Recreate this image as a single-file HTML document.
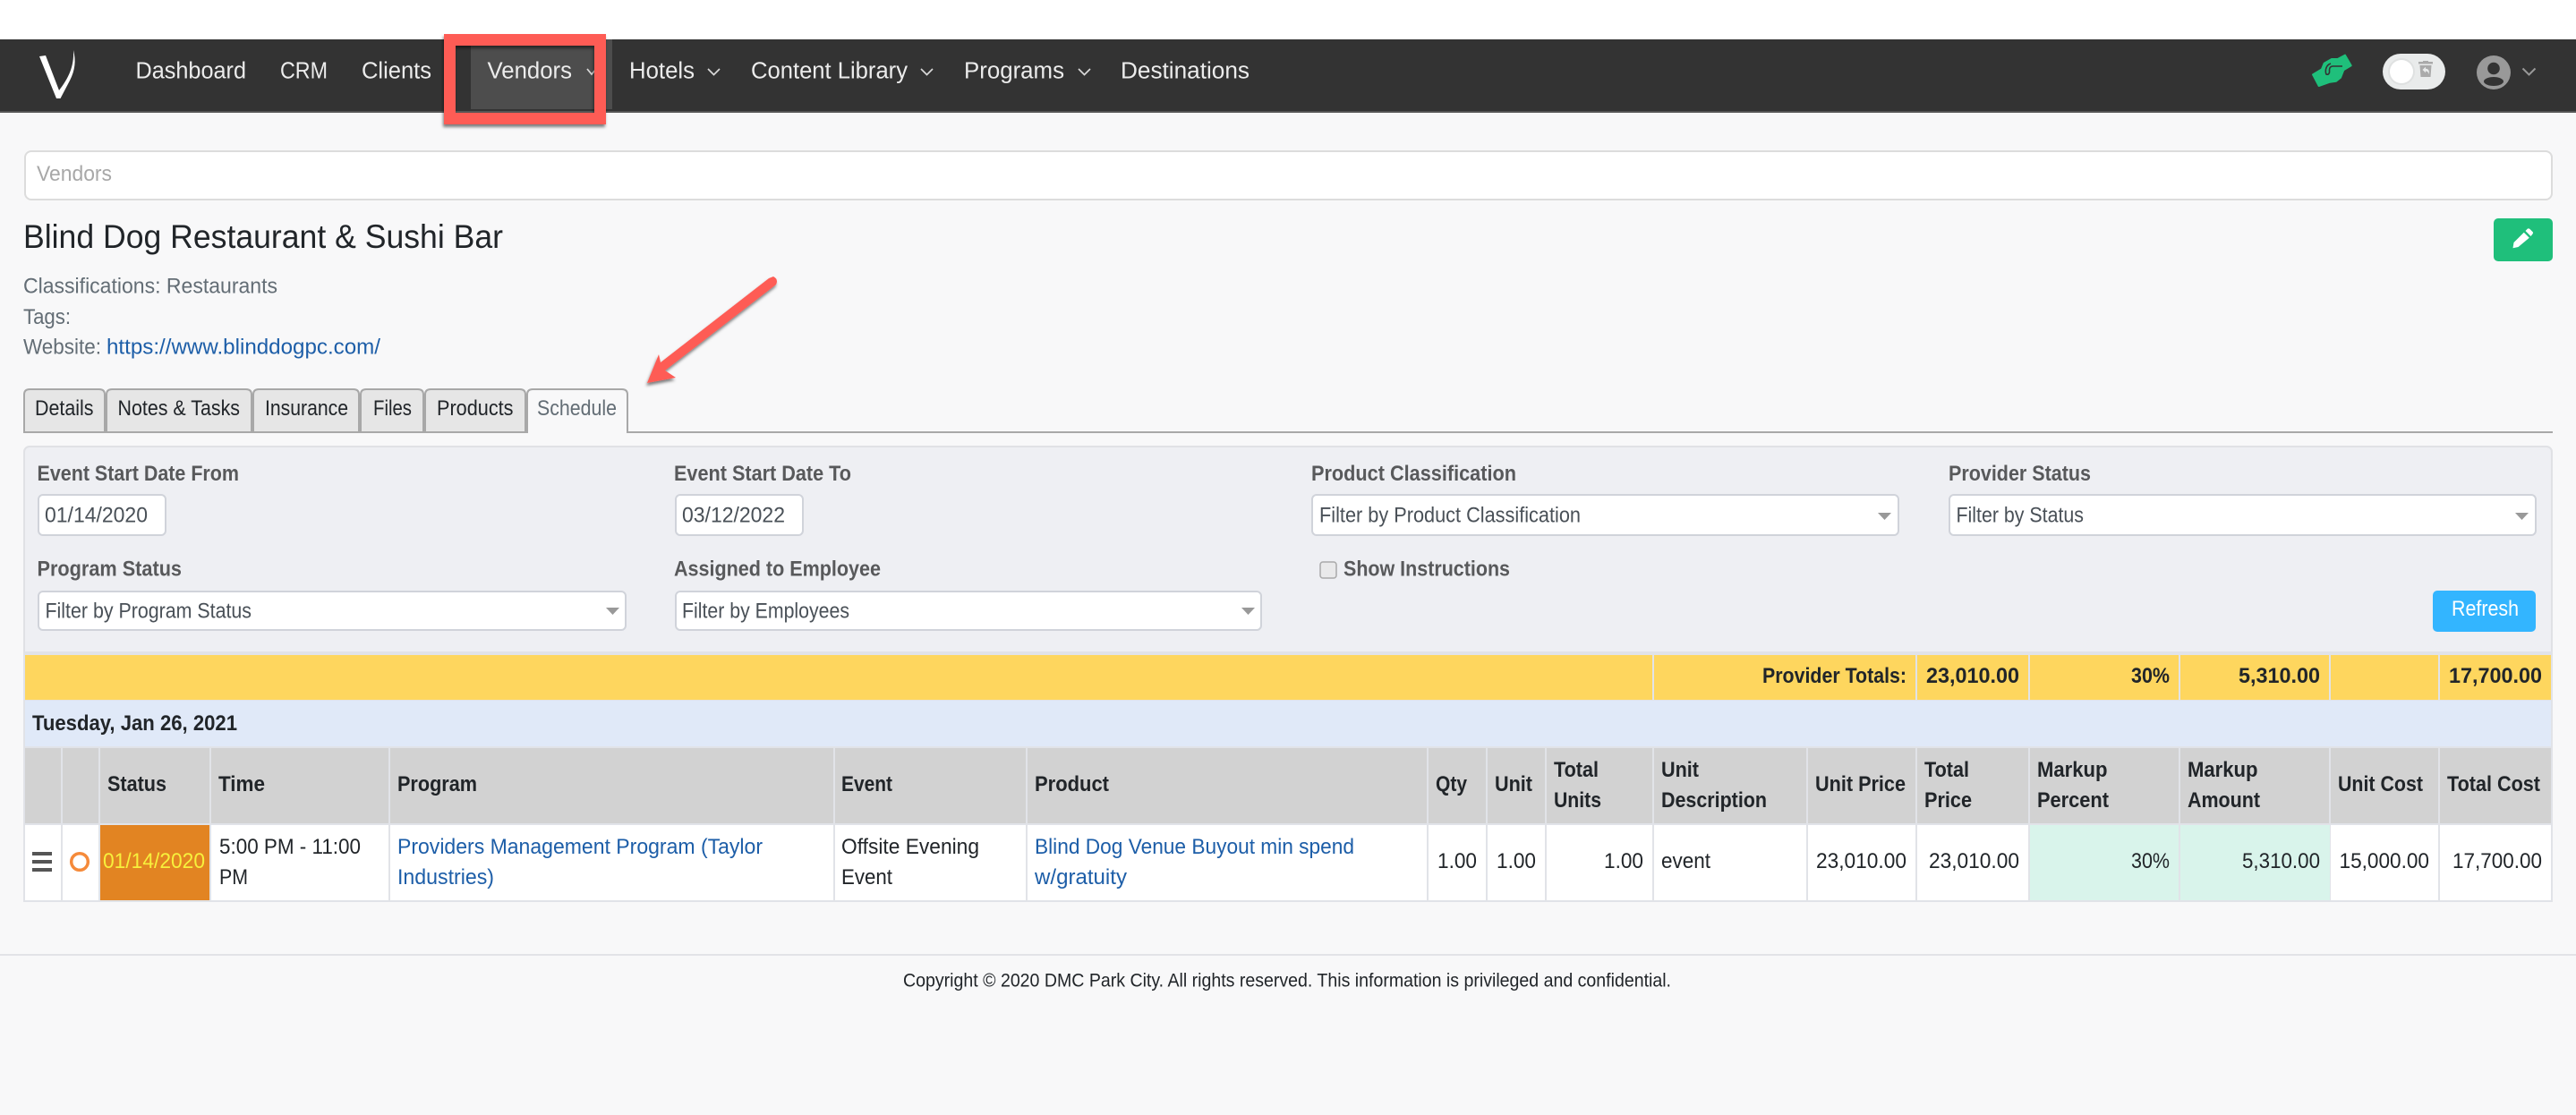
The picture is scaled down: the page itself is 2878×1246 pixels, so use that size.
<!DOCTYPE html>
<html lang="en">
<head>
<meta charset="utf-8">
<title>Blind Dog Restaurant &amp; Sushi Bar</title>
<style>
html,body{margin:0;padding:0;width:2878px;height:1246px;overflow:hidden;background:#f8f8f9}
svg{display:block;position:absolute;left:0;top:0}
text{font-family:"Liberation Sans",Arial,sans-serif;white-space:pre}
.n{font-size:26.2px;fill:#ececec}
.m{font-size:24.2px;fill:#636d75}
.a{font-size:24.2px;fill:#1d5ea8}
.t{font-size:24.2px;fill:#212529}
.l{font-size:24.2px;fill:#58595b;font-weight:700}
.i{font-size:24.2px;fill:#495057}
.h{font-size:24.2px;fill:#212529;font-weight:700}
.f{fill:#fff;stroke:#d0d3da;stroke-width:2}
.tab{fill:#e6e6e6;stroke:#a8a8a8;stroke-width:2}
.c{fill:none;stroke:#d8d8d8;stroke-width:1.7}
.sel{fill:#999}
</style>
</head>
<body>
<svg width="2878" height="1246" viewBox="0 0 2878 1246" xmlns="http://www.w3.org/2000/svg">
<defs>
<filter id="sh" x="-10%" y="-10%" width="125%" height="125%"><feDropShadow dx="-1" dy="3" stdDeviation="1.5" flood-color="#000" flood-opacity=".5"/></filter>
</defs>
<rect width="2878" height="1246" fill="#f8f8f9"/>
<rect width="2878" height="44" fill="#fff"/>
<!-- nav -->
<rect y="44" width="2878" height="82" fill="#333"/>
<rect y="124" width="2878" height="2" fill="#555"/>
<rect x="526" y="44" width="158" height="78" fill="#4d4d4d"/>
<path d="M44 63 L51 62 L66 101 C76 88 83 75 82 56 C85 68 84 78 78 90 L67.500 110 L63 110 Z" fill="#fff"/>
<text class="n" x="151.500" y="87.500" textLength="123.500" lengthAdjust="spacingAndGlyphs">Dashboard</text>
<text class="n" x="313" y="87.500" textLength="53" lengthAdjust="spacingAndGlyphs">CRM</text>
<text class="n" x="404" y="87.500" textLength="78" lengthAdjust="spacingAndGlyphs">Clients</text>
<text class="n" x="544.500" y="87.500" textLength="94.500" lengthAdjust="spacingAndGlyphs">Vendors</text>
<path class="c" d="M656 77 L661 83 L666 77"/>
<text class="n" x="703" y="87.500" textLength="73" lengthAdjust="spacingAndGlyphs">Hotels</text>
<path class="c" d="M791 77 L797.500 83.500 L804 77"/>
<text class="n" x="839" y="87.500" textLength="175" lengthAdjust="spacingAndGlyphs">Content Library</text>
<path class="c" d="M1029 77 L1035.500 83.500 L1042 77"/>
<text class="n" x="1077" y="87.500" textLength="112" lengthAdjust="spacingAndGlyphs">Programs</text>
<path class="c" d="M1205 77 L1211.500 83.500 L1218 77"/>
<text class="n" x="1252" y="87.500" textLength="144" lengthAdjust="spacingAndGlyphs">Destinations</text>
<!-- handshake -->
<path d="M2584 83.300 L2594 77.300 L2596.700 70.700 L2605 66 L2611.700 66 L2620 61.700 L2626.700 73.300 L2618.300 78.300 L2615 86.700 L2610 90.700 L2603 91.700 L2590.700 96 Z" fill="#1fbf7b" stroke="#1fbf7b" stroke-width="2" stroke-linejoin="round"/>
<path d="M2617 74 L2606 74 Q2602.500 74.500 2602.500 78 L2602.500 81 Q2601.500 84 2599 83 Q2598 81 2598.500 77.500 Q2599.500 72.500 2604 71" fill="none" stroke="#333" stroke-width="1.600"/>
<!-- toggle -->
<rect x="2662" y="60" width="70" height="40" rx="20" fill="#e9ebeb"/>
<circle cx="2683" cy="80" r="15" fill="#dfe1e1"/>
<circle cx="2683" cy="80" r="13" fill="#fff"/>
<rect x="2702" y="69" width="16" height="2.500" fill="#aaa"/>
<rect x="2707" y="68" width="6" height="2" fill="#aaa"/>
<path d="M2703.500 73 H2716.500 L2715.500 86 H2704.500 Z" fill="#aaa"/>
<path d="M2706.500 78 L2710 74.800 V76.800 C2713.500 77 2714.500 79.500 2713.500 83 C2713 80.500 2712 79.500 2710 79.500 V81.300 Z" fill="#e9ebeb"/>
<!-- avatar -->
<circle cx="2786" cy="81" r="19" fill="#999"/>
<circle cx="2786" cy="76.500" r="6.800" fill="#333"/>
<ellipse cx="2786" cy="91" rx="11" ry="5" fill="#333"/>
<path d="M2818.500 76.500 L2825.500 83.500 L2832.500 76.500" fill="none" stroke="#999" stroke-width="2"/>
<!-- search -->
<rect x="28" y="169" width="2823" height="54" rx="7" fill="#fff" stroke="#dcdcdc" stroke-width="2"/>
<text x="41" y="202" font-size="24.2" fill="#a8a8a8" textLength="84" lengthAdjust="spacingAndGlyphs">Vendors</text>
<!-- heading -->
<text x="26" y="277" font-size="37.5" fill="#212529" textLength="536" lengthAdjust="spacingAndGlyphs">Blind Dog Restaurant &amp; Sushi Bar</text>
<rect x="2786" y="244" width="66" height="48" rx="5" fill="#1fbf7b"/>
<path d="M2824 255.500 Q2825.500 255 2826.500 256 L2829.500 259 Q2830.500 260 2829.500 261.500 L2827.500 264 L2821.500 258 Z M2819.800 259.700 L2825.800 265.700 L2813.500 276 L2807.500 277.300 L2808.500 271 Z" fill="#fff"/>
<text class="m" x="26" y="327.500" textLength="284" lengthAdjust="spacingAndGlyphs">Classifications: Restaurants</text>
<text class="m" x="26" y="362" textLength="53" lengthAdjust="spacingAndGlyphs">Tags:</text>
<text class="m" x="26" y="395.500" textLength="87" lengthAdjust="spacingAndGlyphs">Website:</text>
<text class="a" x="119" y="395.500" textLength="306" lengthAdjust="spacingAndGlyphs">https://www.blinddogpc.com/</text>
<!-- tabs -->
<path class="tab" d="M27 483 V441 Q27 435 33 435 H111 Q117 435 117 441 V483 Z"/>
<path class="tab" d="M119 483 V441 Q119 435 125 435 H275 Q281 435 281 441 V483 Z"/>
<path class="tab" d="M283 483 V441 Q283 435 289 435 H395 Q401 435 401 441 V483 Z"/>
<path class="tab" d="M403 483 V441 Q403 435 409 435 H467 Q473 435 473 441 V483 Z"/>
<path class="tab" d="M475 483 V441 Q475 435 481 435 H581 Q587 435 587 441 V483 Z"/>
<rect x="26" y="482" width="2826" height="2" fill="#a8a8a8"/>
<path d="M589 484 V441 Q589 435 595 435 H695 Q701 435 701 441 V484" fill="#f8f8f9" stroke="#a8a8a8" stroke-width="2"/>
<text class="t" x="39" y="464" textLength="65.500" lengthAdjust="spacingAndGlyphs">Details</text>
<text class="t" x="131.500" y="464" textLength="136.500" lengthAdjust="spacingAndGlyphs">Notes &amp; Tasks</text>
<text class="t" x="296" y="464" textLength="93" lengthAdjust="spacingAndGlyphs">Insurance</text>
<text class="t" x="417" y="464" textLength="43" lengthAdjust="spacingAndGlyphs">Files</text>
<text class="t" x="488" y="464" textLength="85.500" lengthAdjust="spacingAndGlyphs">Products</text>
<text class="m" x="600" y="464" textLength="89" lengthAdjust="spacingAndGlyphs">Schedule</text>
<!-- filter panel -->
<rect x="27" y="499" width="2824" height="240" rx="6" fill="#eeeff3" stroke="#e0e1e5" stroke-width="2"/>
<text class="l" x="41.500" y="537" textLength="225.500" lengthAdjust="spacingAndGlyphs">Event Start Date From</text>
<rect class="f" x="43" y="553" width="142" height="45" rx="5"/>
<text class="i" x="50" y="583.500" textLength="115" lengthAdjust="spacingAndGlyphs">01/14/2020</text>
<text class="l" x="753" y="537" textLength="198" lengthAdjust="spacingAndGlyphs">Event Start Date To</text>
<rect class="f" x="755" y="553" width="142" height="45" rx="5"/>
<text class="i" x="762" y="583.500" textLength="115" lengthAdjust="spacingAndGlyphs">03/12/2022</text>
<text class="l" x="1465" y="537" textLength="229" lengthAdjust="spacingAndGlyphs">Product Classification</text>
<rect class="f" x="1466" y="553" width="655" height="45" rx="5"/>
<text class="i" x="1474" y="583.500" textLength="292" lengthAdjust="spacingAndGlyphs">Filter by Product Classification</text>
<path class="sel" d="M2098 573 H2113 L2105.500 581 Z"/>
<text class="l" x="2177" y="537" textLength="159" lengthAdjust="spacingAndGlyphs">Provider Status</text>
<rect class="f" x="2178" y="553" width="655" height="45" rx="5"/>
<text class="i" x="2185.500" y="583.500" textLength="142.500" lengthAdjust="spacingAndGlyphs">Filter by Status</text>
<path class="sel" d="M2810 573 H2825 L2817.500 581 Z"/>
<text class="l" x="41.500" y="643.500" textLength="161.500" lengthAdjust="spacingAndGlyphs">Program Status</text>
<rect class="f" x="43" y="661" width="656" height="43" rx="5"/>
<text class="i" x="50.500" y="690.500" textLength="230.500" lengthAdjust="spacingAndGlyphs">Filter by Program Status</text>
<path class="sel" d="M677 679 H692 L684.500 687 Z"/>
<text class="l" x="753" y="643.500" textLength="231" lengthAdjust="spacingAndGlyphs">Assigned to Employee</text>
<rect class="f" x="755" y="661" width="654" height="43" rx="5"/>
<text class="i" x="762" y="690.500" textLength="187" lengthAdjust="spacingAndGlyphs">Filter by Employees</text>
<path class="sel" d="M1387 679 H1402 L1394.500 687 Z"/>
<rect x="1475" y="628" width="18" height="18" rx="3" fill="#e9e9ea" stroke="#a9a9a9" stroke-width="1.500"/>
<text class="l" x="1501" y="643.500" textLength="186" lengthAdjust="spacingAndGlyphs">Show Instructions</text>
<rect x="2718" y="660" width="115" height="46" rx="5" fill="#33b5ff"/>
<text x="2739" y="688" font-size="24.2" fill="#fff" textLength="75" lengthAdjust="spacingAndGlyphs">Refresh</text>
<!-- table -->
<rect x="26" y="728" width="2826" height="280" fill="#e1e3e8"/>
<rect x="28" y="732" width="1818" height="50" fill="#fed65e"/>
<rect x="1848" y="732" width="292" height="50" fill="#fed65e"/>
<rect x="2142" y="732" width="124" height="50" fill="#fed65e"/>
<rect x="2268" y="732" width="166" height="50" fill="#fed65e"/>
<rect x="2436" y="732" width="166" height="50" fill="#fed65e"/>
<rect x="2604" y="732" width="120" height="50" fill="#fed65e"/>
<rect x="2726" y="732" width="124" height="50" fill="#fed65e"/>
<text class="h" x="1969" y="763" textLength="161" lengthAdjust="spacingAndGlyphs">Provider Totals:</text>
<text class="h" x="2152" y="763" textLength="104" lengthAdjust="spacingAndGlyphs">23,010.00</text>
<text class="h" x="2381" y="763" textLength="43" lengthAdjust="spacingAndGlyphs">30%</text>
<text class="h" x="2501" y="763" textLength="91" lengthAdjust="spacingAndGlyphs">5,310.00</text>
<text class="h" x="2736" y="763" textLength="104" lengthAdjust="spacingAndGlyphs">17,700.00</text>
<rect x="28" y="783" width="2822" height="51" fill="#e0e9f8"/>
<text class="h" x="36" y="816" textLength="229" lengthAdjust="spacingAndGlyphs">Tuesday, Jan 26, 2021</text>
<!-- header cells -->
<g fill="#d2d2d2">
<rect x="28" y="836" width="40" height="84"/><rect x="70" y="836" width="40" height="84"/><rect x="112" y="836" width="122" height="84"/><rect x="236" y="836" width="198" height="84"/><rect x="436" y="836" width="495" height="84"/><rect x="933" y="836" width="213" height="84"/><rect x="1148" y="836" width="446" height="84"/><rect x="1596" y="836" width="64" height="84"/><rect x="1662" y="836" width="64" height="84"/><rect x="1728" y="836" width="118" height="84"/><rect x="1848" y="836" width="170" height="84"/><rect x="2020" y="836" width="120" height="84"/><rect x="2142" y="836" width="124" height="84"/><rect x="2268" y="836" width="166" height="84"/><rect x="2436" y="836" width="166" height="84"/><rect x="2604" y="836" width="120" height="84"/><rect x="2726" y="836" width="124" height="84"/>
</g>
<text class="h" x="120" y="884" textLength="66" lengthAdjust="spacingAndGlyphs">Status</text>
<text class="h" x="244" y="884" textLength="52" lengthAdjust="spacingAndGlyphs">Time</text>
<text class="h" x="444" y="884" textLength="89" lengthAdjust="spacingAndGlyphs">Program</text>
<text class="h" x="940" y="884" textLength="57" lengthAdjust="spacingAndGlyphs">Event</text>
<text class="h" x="1156" y="884" textLength="83" lengthAdjust="spacingAndGlyphs">Product</text>
<text class="h" x="1604" y="884" textLength="35" lengthAdjust="spacingAndGlyphs">Qty</text>
<text class="h" x="1670" y="884" textLength="42" lengthAdjust="spacingAndGlyphs">Unit</text>
<text class="h" x="1736" y="868" textLength="50" lengthAdjust="spacingAndGlyphs">Total</text>
<text class="h" x="1736" y="902" textLength="53" lengthAdjust="spacingAndGlyphs">Units</text>
<text class="h" x="1856" y="868" textLength="42" lengthAdjust="spacingAndGlyphs">Unit</text>
<text class="h" x="1856" y="902" textLength="118" lengthAdjust="spacingAndGlyphs">Description</text>
<text class="h" x="2028" y="884" textLength="101" lengthAdjust="spacingAndGlyphs">Unit Price</text>
<text class="h" x="2150" y="868" textLength="50" lengthAdjust="spacingAndGlyphs">Total</text>
<text class="h" x="2150" y="902" textLength="53" lengthAdjust="spacingAndGlyphs">Price</text>
<text class="h" x="2276" y="868" textLength="78.500" lengthAdjust="spacingAndGlyphs">Markup</text>
<text class="h" x="2276" y="902" textLength="80" lengthAdjust="spacingAndGlyphs">Percent</text>
<text class="h" x="2444" y="868" textLength="78.500" lengthAdjust="spacingAndGlyphs">Markup</text>
<text class="h" x="2444" y="902" textLength="81" lengthAdjust="spacingAndGlyphs">Amount</text>
<text class="h" x="2612" y="884" textLength="95" lengthAdjust="spacingAndGlyphs">Unit Cost</text>
<text class="h" x="2734" y="884" textLength="104" lengthAdjust="spacingAndGlyphs">Total Cost</text>
<!-- body cells -->
<g fill="#fff">
<rect x="28" y="922" width="40" height="84"/><rect x="70" y="922" width="40" height="84"/><rect x="236" y="922" width="198" height="84"/><rect x="436" y="922" width="495" height="84"/><rect x="933" y="922" width="213" height="84"/><rect x="1148" y="922" width="446" height="84"/><rect x="1596" y="922" width="64" height="84"/><rect x="1662" y="922" width="64" height="84"/><rect x="1728" y="922" width="118" height="84"/><rect x="1848" y="922" width="170" height="84"/><rect x="2020" y="922" width="120" height="84"/><rect x="2142" y="922" width="124" height="84"/><rect x="2604" y="922" width="120" height="84"/><rect x="2726" y="922" width="124" height="84"/>
</g>
<rect x="112" y="922" width="122" height="84" fill="#e28422"/>
<rect x="2268" y="922" width="166" height="84" fill="#d9f4eb"/>
<rect x="2436" y="922" width="167" height="84" fill="#d9f4eb"/>
<rect x="36" y="952" width="22" height="4" fill="#555"/><rect x="36" y="961" width="22" height="4" fill="#555"/><rect x="36" y="970" width="22" height="4" fill="#555"/>
<circle cx="89" cy="963" r="9.300" fill="none" stroke="#f58a3a" stroke-width="3.500"/>
<text x="115" y="970" font-size="24.2" fill="#f7f03c" textLength="114" lengthAdjust="spacingAndGlyphs">01/14/2020</text>
<text class="t" x="245" y="954" textLength="158" lengthAdjust="spacingAndGlyphs">5:00 PM - 11:00</text>
<text class="t" x="245" y="988" textLength="32" lengthAdjust="spacingAndGlyphs">PM</text>
<text class="a" x="444" y="954" textLength="408" lengthAdjust="spacingAndGlyphs">Providers Management Program (Taylor</text>
<text class="a" x="444" y="988" textLength="108" lengthAdjust="spacingAndGlyphs">Industries)</text>
<text class="t" x="940" y="954" textLength="154" lengthAdjust="spacingAndGlyphs">Offsite Evening</text>
<text class="t" x="940" y="988" textLength="57" lengthAdjust="spacingAndGlyphs">Event</text>
<text class="a" x="1156" y="954" textLength="357" lengthAdjust="spacingAndGlyphs">Blind Dog Venue Buyout min spend</text>
<text class="a" x="1156" y="988" textLength="103" lengthAdjust="spacingAndGlyphs">w/gratuity</text>
<text class="t" x="1606" y="970" textLength="44" lengthAdjust="spacingAndGlyphs">1.00</text>
<text class="t" x="1672" y="970" textLength="44" lengthAdjust="spacingAndGlyphs">1.00</text>
<text class="t" x="1792" y="970" textLength="44" lengthAdjust="spacingAndGlyphs">1.00</text>
<text class="t" x="1856" y="970" textLength="55" lengthAdjust="spacingAndGlyphs">event</text>
<text class="t" x="2029" y="970" textLength="101" lengthAdjust="spacingAndGlyphs">23,010.00</text>
<text class="t" x="2155" y="970" textLength="101" lengthAdjust="spacingAndGlyphs">23,010.00</text>
<text class="t" x="2381" y="970" textLength="43" lengthAdjust="spacingAndGlyphs">30%</text>
<text class="t" x="2505" y="970" textLength="87" lengthAdjust="spacingAndGlyphs">5,310.00</text>
<text class="t" x="2613.500" y="970" textLength="100.500" lengthAdjust="spacingAndGlyphs">15,000.00</text>
<text class="t" x="2740" y="970" textLength="100" lengthAdjust="spacingAndGlyphs">17,700.00</text>
<!-- footer -->
<rect y="1066" width="2878" height="2" fill="#e2e3e7"/>
<text x="1009" y="1102.500" font-size="21" fill="#212529" textLength="858" lengthAdjust="spacingAndGlyphs">Copyright © 2020 DMC Park City. All rights reserved. This information is privileged and confidential.</text>
<!-- annotations -->
<rect x="502.500" y="44.500" width="168" height="88" fill="none" stroke="#fe5c54" stroke-width="13" filter="url(#sh)"/>
<path d="M864 309 Q870 312 867 318 L743 414 L755 422 L723 428 L736 396 L738 405 L859 311 Z" fill="#fe5c54" filter="url(#sh)"/>
</svg>
</body>
</html>
